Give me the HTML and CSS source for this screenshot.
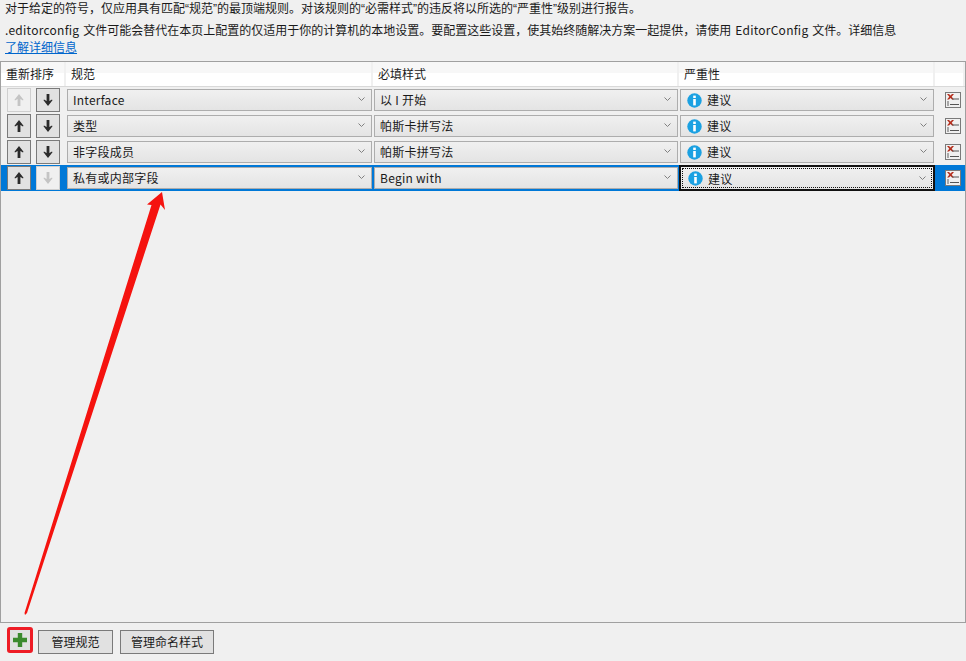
FILE: index.html
```html
<!DOCTYPE html>
<html lang="zh-CN">
<head>
<meta charset="utf-8">
<title>命名</title>
<link rel="stylesheet" href="styles.css">
</head>
<body>
<svg width="0" height="0" class="defs">
  <defs>
    <symbol id="up" viewBox="0 0 12 14"><path d="M6 1 L10.5 6.8 L10 7.6 L7.4 6 L7.4 13 L4.6 13 L4.6 6 L2 7.6 L1.5 6.8 Z"/></symbol>
    <symbol id="down" viewBox="0 0 12 14"><path d="M6 13 L10.5 7.2 L10 6.4 L7.4 8 L7.4 1 L4.6 1 L4.6 8 L2 6.4 L1.5 7.2 Z"/></symbol>
    <symbol id="chev" viewBox="0 0 7 4"><path d="M0.5 0.5 L3.5 3.5 L6.5 0.5" fill="none" stroke="#808080" stroke-width="1"/></symbol>
    <symbol id="info" viewBox="0 0 15 15"><circle cx="7.5" cy="7.5" r="7.2" fill="#1ba1e2"/><rect x="6.2" y="2.6" width="2.6" height="2.4" fill="#fff"/><rect x="6.2" y="6" width="2.6" height="6.4" fill="#fff"/></symbol>
    <symbol id="del" viewBox="0 0 14 14"><path d="M1 1 L3 1 L4.5 2.6 L6 1 L8 1 L5.7 3.8 L8 6.6 L6 6.6 L4.5 5 L3 6.6 L1 6.6 L3.3 3.8 Z" fill="#b5301f"/><rect x="6" y="5.5" width="7" height="1" fill="#555"/><rect x="1" y="8" width="2" height="5" fill="#a8a8a8"/><rect x="4" y="11" width="9" height="1" fill="#555"/></symbol>
  </defs>
</svg>
<p class="intro">对于给定的符号，仅应用具有匹配<span class="q">“</span>规范<span class="q">”</span>的最顶端规则。对该规则的<span class="q">“</span>必需样式<span class="q">”</span>的违反将以所选的<span class="q">“</span>严重性<span class="q">”</span>级别进行报告。</p>
<p class="note"><span class="latin">.editorconfig </span>文件可能会替代在本页上配置的仅适用于你的计算机的本地设置。要配置这些设置，使其始终随解决方案一起提供，请使用<span class="latin"> EditorConfig </span>文件。详细信息<br><a href="#" class="link">了解详细信息</a></p>
<section class="grid">
  <div class="row head">
    <div class="hcell">重新排序</div>
    <div class="hcell">规范</div>
    <div class="hcell">必填样式</div>
    <div class="hcell">严重性</div>
    <div class="hcell"></div>
  </div>
  <div class="row">
    <div class="order"><span class="btn off"><svg class="arrow"><use href="#up"/></svg></span><span class="btn"><svg class="arrow"><use href="#down"/></svg></span></div>
    <div class="combo"><span class="val">Interface</span><svg class="chev"><use href="#chev"/></svg></div>
    <div class="combo"><span class="val">以 I 开始</span><svg class="chev"><use href="#chev"/></svg></div>
    <div class="combo"><svg class="info"><use href="#info"/></svg><span class="val">建议</span><svg class="chev"><use href="#chev"/></svg></div>
    <div class="delcell"><span class="delbtn"><svg class="del"><use href="#del"/></svg></span></div>
  </div>
  <div class="row">
    <div class="order"><span class="btn"><svg class="arrow"><use href="#up"/></svg></span><span class="btn"><svg class="arrow"><use href="#down"/></svg></span></div>
    <div class="combo"><span class="val">类型</span><svg class="chev"><use href="#chev"/></svg></div>
    <div class="combo"><span class="val">帕斯卡拼写法</span><svg class="chev"><use href="#chev"/></svg></div>
    <div class="combo"><svg class="info"><use href="#info"/></svg><span class="val">建议</span><svg class="chev"><use href="#chev"/></svg></div>
    <div class="delcell"><span class="delbtn"><svg class="del"><use href="#del"/></svg></span></div>
  </div>
  <div class="row">
    <div class="order"><span class="btn"><svg class="arrow"><use href="#up"/></svg></span><span class="btn"><svg class="arrow"><use href="#down"/></svg></span></div>
    <div class="combo"><span class="val">非字段成员</span><svg class="chev"><use href="#chev"/></svg></div>
    <div class="combo"><span class="val">帕斯卡拼写法</span><svg class="chev"><use href="#chev"/></svg></div>
    <div class="combo"><svg class="info"><use href="#info"/></svg><span class="val">建议</span><svg class="chev"><use href="#chev"/></svg></div>
    <div class="delcell"><span class="delbtn"><svg class="del"><use href="#del"/></svg></span></div>
  </div>
  <div class="row selected">
    <div class="order"><span class="btn"><svg class="arrow"><use href="#up"/></svg></span><span class="btn off"><svg class="arrow"><use href="#down"/></svg></span></div>
    <div class="combo"><span class="val">私有或内部字段</span><svg class="chev"><use href="#chev"/></svg></div>
    <div class="combo"><span class="val">Begin with</span><svg class="chev"><use href="#chev"/></svg></div>
    <div class="combo focus"><svg class="info"><use href="#info"/></svg><span class="val">建议</span><svg class="chev"><use href="#chev"/></svg></div>
    <div class="delcell"><span class="delbtn"><svg class="del"><use href="#del"/></svg></span></div>
  </div>
</section>
<footer class="foot">
  <span class="addbtn"><svg class="plus" viewBox="0 0 16 16"><path d="M5.8 1 H10.2 V5.8 H15 V10.2 H10.2 V15 H5.8 V10.2 H1 V5.8 H5.8 Z" fill="#3c8a2e"/></svg></span>
  <span class="act act-a">管理规范</span>
  <span class="act act-b">管理命名样式</span>
</footer>
<svg class="annot" viewBox="0 0 966 661"><path d="M162 192 L165 210 L160.5 204.5 L27 613 L25 615 L24.5 613 L151.5 205 L147 204.5 Z" fill="#f5130f"/></svg>
</body>
</html>
```
FILE: styles.css
```css
* { box-sizing: border-box; }
html, body { margin: 0; padding: 0; }
body {
  position: relative;
  width: 966px;
  height: 661px;
  overflow: hidden;
  background: #f0f0f0;
  color: #1a1a1a;
  font: 12px/17px "Noto Sans CJK SC", "Noto Sans", sans-serif;
  display: flex;
  flex-direction: column;
}
.defs { position: absolute; }
.intro { margin: 0; padding: 0 5px; height: 21px; line-height: 15px; white-space: nowrap; }
.note { margin: 0; padding: 0 5px; height: 40px; white-space: nowrap; }
.q { font-family: "Liberation Sans", sans-serif; }
.latin { letter-spacing: 0.25px; word-spacing: 1px; }
.link { color: #0066cc; text-decoration: underline; }
.grid {
  height: 562px;
  border: 1px solid #a0a0a0;
  flex: none;
}
.row {
  display: grid;
  grid-template-columns: 65px 307px 306px 256px 30px;
  height: 26px;
  align-items: center;
}
.head {
  height: 25px;
  background: linear-gradient(#f7f7f7 0 45%, #fff 45%);
  border-bottom: 1px solid #d9d9d9;
  align-items: stretch;
}
.hcell {
  padding: 3px 5px 0;
  border-right: 2px solid #f0f0f0;
  white-space: nowrap;
}
.order { display: flex; gap: 5px; padding-left: 6px; }
.btn {
  width: 24px;
  height: 24px;
  display: flex;
  align-items: center;
  justify-content: center;
  background: #e1e1e1;
  border: 1px solid #7a7a7a;
}
.btn .arrow { fill: #2b2b2b; }
.btn.off { background: #f0f0f0; border-color: #cfcfcf; }
.btn.off .arrow { fill: #c4c4c4; }
.arrow { width: 12px; height: 14px; }
.combo {
  height: 22px;
  margin: 0 1px;
  padding: 0 6px 1px 5px;
  display: flex;
  align-items: center;
  border: 1px solid #adadad;
  background: linear-gradient(#f0f0f0, #e4e4e4);
  letter-spacing: 0.25px;
}
.val { flex: 1; white-space: nowrap; }
.chev { width: 7px; height: 4px; flex: none; margin-bottom: 1px; }
.info { width: 15px; height: 15px; margin: 1px 5px 0 1px; flex: none; }
.delcell { display: flex; justify-content: flex-end; padding-right: 4px; }
.delbtn {
  width: 16px;
  height: 16px;
  display: flex;
  align-items: center;
  justify-content: center;
  background: #f0f0f0;
  border: 1px solid #7a7a7a;
}
.del { width: 14px; height: 14px; }
.selected { background: #0078d7; }
.focus {
  height: 26px;
  margin: 0;
  padding: 0 7px 0 6px;
  border: 2px solid #111;
  outline: 1px dotted #111;
  outline-offset: -4px;
}
.foot {
  display: flex;
  align-items: flex-start;
  padding: 4px 0 0 7px;
  gap: 5px;
}
.addbtn {
  width: 26px;
  height: 26px;
  display: flex;
  align-items: center;
  justify-content: center;
  border: 3px solid #ee1c25;
  border-radius: 3px;
  background: #e1e1e1;
}
.plus { width: 16px; height: 16px; }
.act {
  height: 24px;
  margin-top: 3px;
  padding-bottom: 1px;
  display: flex;
  align-items: center;
  justify-content: center;
  background: #e1e1e1;
  border: 1px solid #7a7a7a;
  white-space: nowrap;
}
.act-a { width: 75px; }
.act-b { width: 94px; margin-left: 2px; }
.annot { position: absolute; left: 0; top: 0; width: 966px; height: 661px; pointer-events: none; }
```
